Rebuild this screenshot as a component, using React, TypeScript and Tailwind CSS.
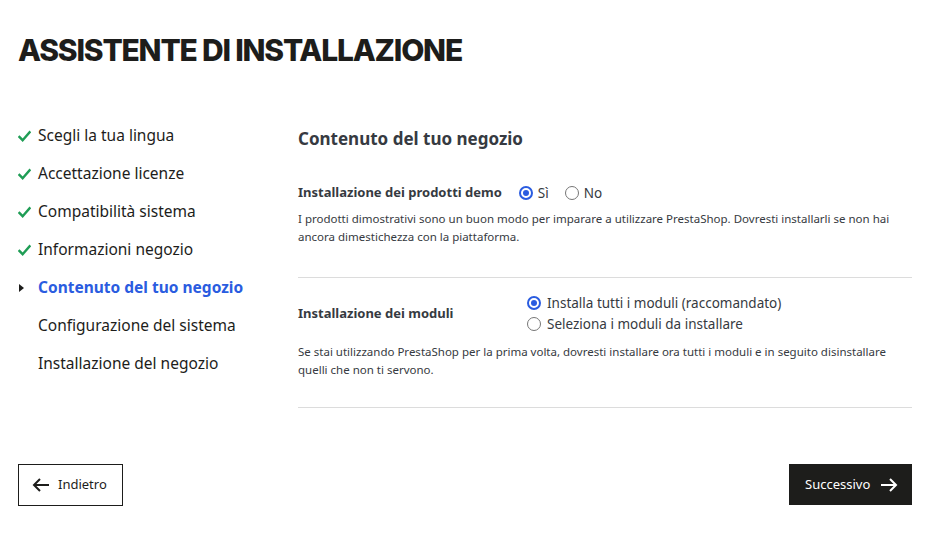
import React from "react";

const steps = [
  { label: "Scegli la tua lingua", state: "done" },
  { label: "Accettazione licenze", state: "done" },
  { label: "Compatibilità sistema", state: "done" },
  { label: "Informazioni negozio", state: "done" },
  { label: "Contenuto del tuo negozio", state: "active" },
  { label: "Configurazione del sistema", state: "todo" },
  { label: "Installazione del negozio", state: "todo" },
];

function Check() {
  return (
    <svg width="13" height="13" viewBox="0 0 14 14" className="shrink-0">
      <path d="M1.5 7.5 L5 11 L12.5 2.5" fill="none" stroke="#1f9d55" strokeWidth="2.6" strokeLinecap="square" />
    </svg>
  );
}

function Radio({ checked }: { checked: boolean }) {
  return checked ? (
    <span className="w-[14px] h-[14px] rounded-full border-[2px] border-[#2a5ce0] flex items-center justify-center shrink-0">
      <span className="w-[6px] h-[6px] rounded-full bg-[#2a5ce0]" />
    </span>
  ) : (
    <span className="w-[14px] h-[14px] rounded-full border-[1.5px] border-[#767676] shrink-0" />
  );
}

export default function App() {
  return (
    <div className="w-[933px] h-[542px] bg-white text-[#1d1d1b] font-['Noto_Sans',sans-serif] pl-[18px] pr-[21px] pt-[31px] flex flex-col">
      <h1 className="font-['Inter',sans-serif] font-extrabold text-[30px] leading-[38px] tracking-[-1.2px] text-[#1d1d1b]">
        ASSISTENTE DI INSTALLAZIONE
      </h1>
      <div className="flex mt-[56px]">
        <ul className="w-[280px] flex flex-col gap-[16px]">
          {steps.map((s) => (
            <li key={s.label} className="flex items-center h-[22px]">
              <span className="w-[20px] flex items-center">
                {s.state === "done" && <Check />}
                {s.state === "active" && (
                  <svg width="6" height="8" viewBox="0 0 6 8" className="ml-[1px]"><path d="M0 0 L5 4 L0 8 Z" fill="#1d1d1b" /></svg>
                )}
              </span>
              <span
                className={
                  s.state === "active"
                    ? "text-[15.5px] font-bold text-[#2a5ce0]"
                    : "text-[15.5px] text-[#1d1d1b]"
                }
              >
                {s.label}
              </span>
            </li>
          ))}
        </ul>
        <div className="flex-1 text-[#363a41]">
          <h2 className="text-[17px] font-bold leading-[22px] mt-[3px]">Contenuto del tuo negozio</h2>
          <div className="mt-[33px] flex items-center h-[20px]">
            <span className="text-[13px] font-bold mr-[17px]">Installazione dei prodotti demo</span>
            <label className="flex items-center gap-[5px] text-[13.5px]">
              <Radio checked /> Sì
            </label>
            <label className="flex items-center gap-[5px] text-[13.5px] ml-[16px]">
              <Radio checked={false} /> No
            </label>
          </div>
          <p className="mt-[7px] text-[11.5px] leading-[18px] max-w-[600px] text-[#363a41]">
            I prodotti dimostrativi sono un buon modo per imparare a utilizzare PrestaShop. Dovresti installarli se non hai ancora dimestichezza con la piattaforma.
          </p>
          <div className="mt-[31px] border-t border-[#dcdcdc]" />
          <div className="mt-[16px] flex items-center">
            <span className="text-[13px] font-bold w-[229px]">Installazione dei moduli</span>
            <div className="flex flex-col gap-[3px]">
              <label className="flex items-center gap-[6px] text-[13.5px] leading-[18px]">
                <Radio checked /> Installa tutti i moduli (raccomandato)
              </label>
              <label className="flex items-center gap-[6px] text-[13.5px] leading-[18px]">
                <Radio checked={false} /> Seleziona i moduli da installare
              </label>
            </div>
          </div>
          <p className="mt-[10px] text-[11.5px] leading-[18px] max-w-[600px]">
            Se stai utilizzando PrestaShop per la prima volta, dovresti installare ora tutti i moduli e in seguito disinstallare quelli che non ti servono.
          </p>
          <div className="mt-[28px] border-t border-[#dcdcdc]" />
        </div>
      </div>
      <div className="flex justify-between mt-[56px]">
        <button className="h-[42px] w-[105px] border border-[#1d1d1b] flex items-center gap-[8px] pl-[13px] text-[13px] text-[#1d1d1b]">
          <svg width="18" height="16" viewBox="0 0 18 16"><path d="M17 8 H2 M8 2 L2 8 L8 14" fill="none" stroke="#1d1d1b" strokeWidth="2" /></svg>
          Indietro
        </button>
        <button className="h-[41px] w-[123px] bg-[#1d1d1b] flex items-center gap-[10px] pl-[16px] text-[13px] text-white">
          Successivo
          <svg width="18" height="16" viewBox="0 0 18 16"><path d="M1 8 H16 M10 2 L16 8 L10 14" fill="none" stroke="white" strokeWidth="2" /></svg>
        </button>
      </div>
    </div>
  );
}
